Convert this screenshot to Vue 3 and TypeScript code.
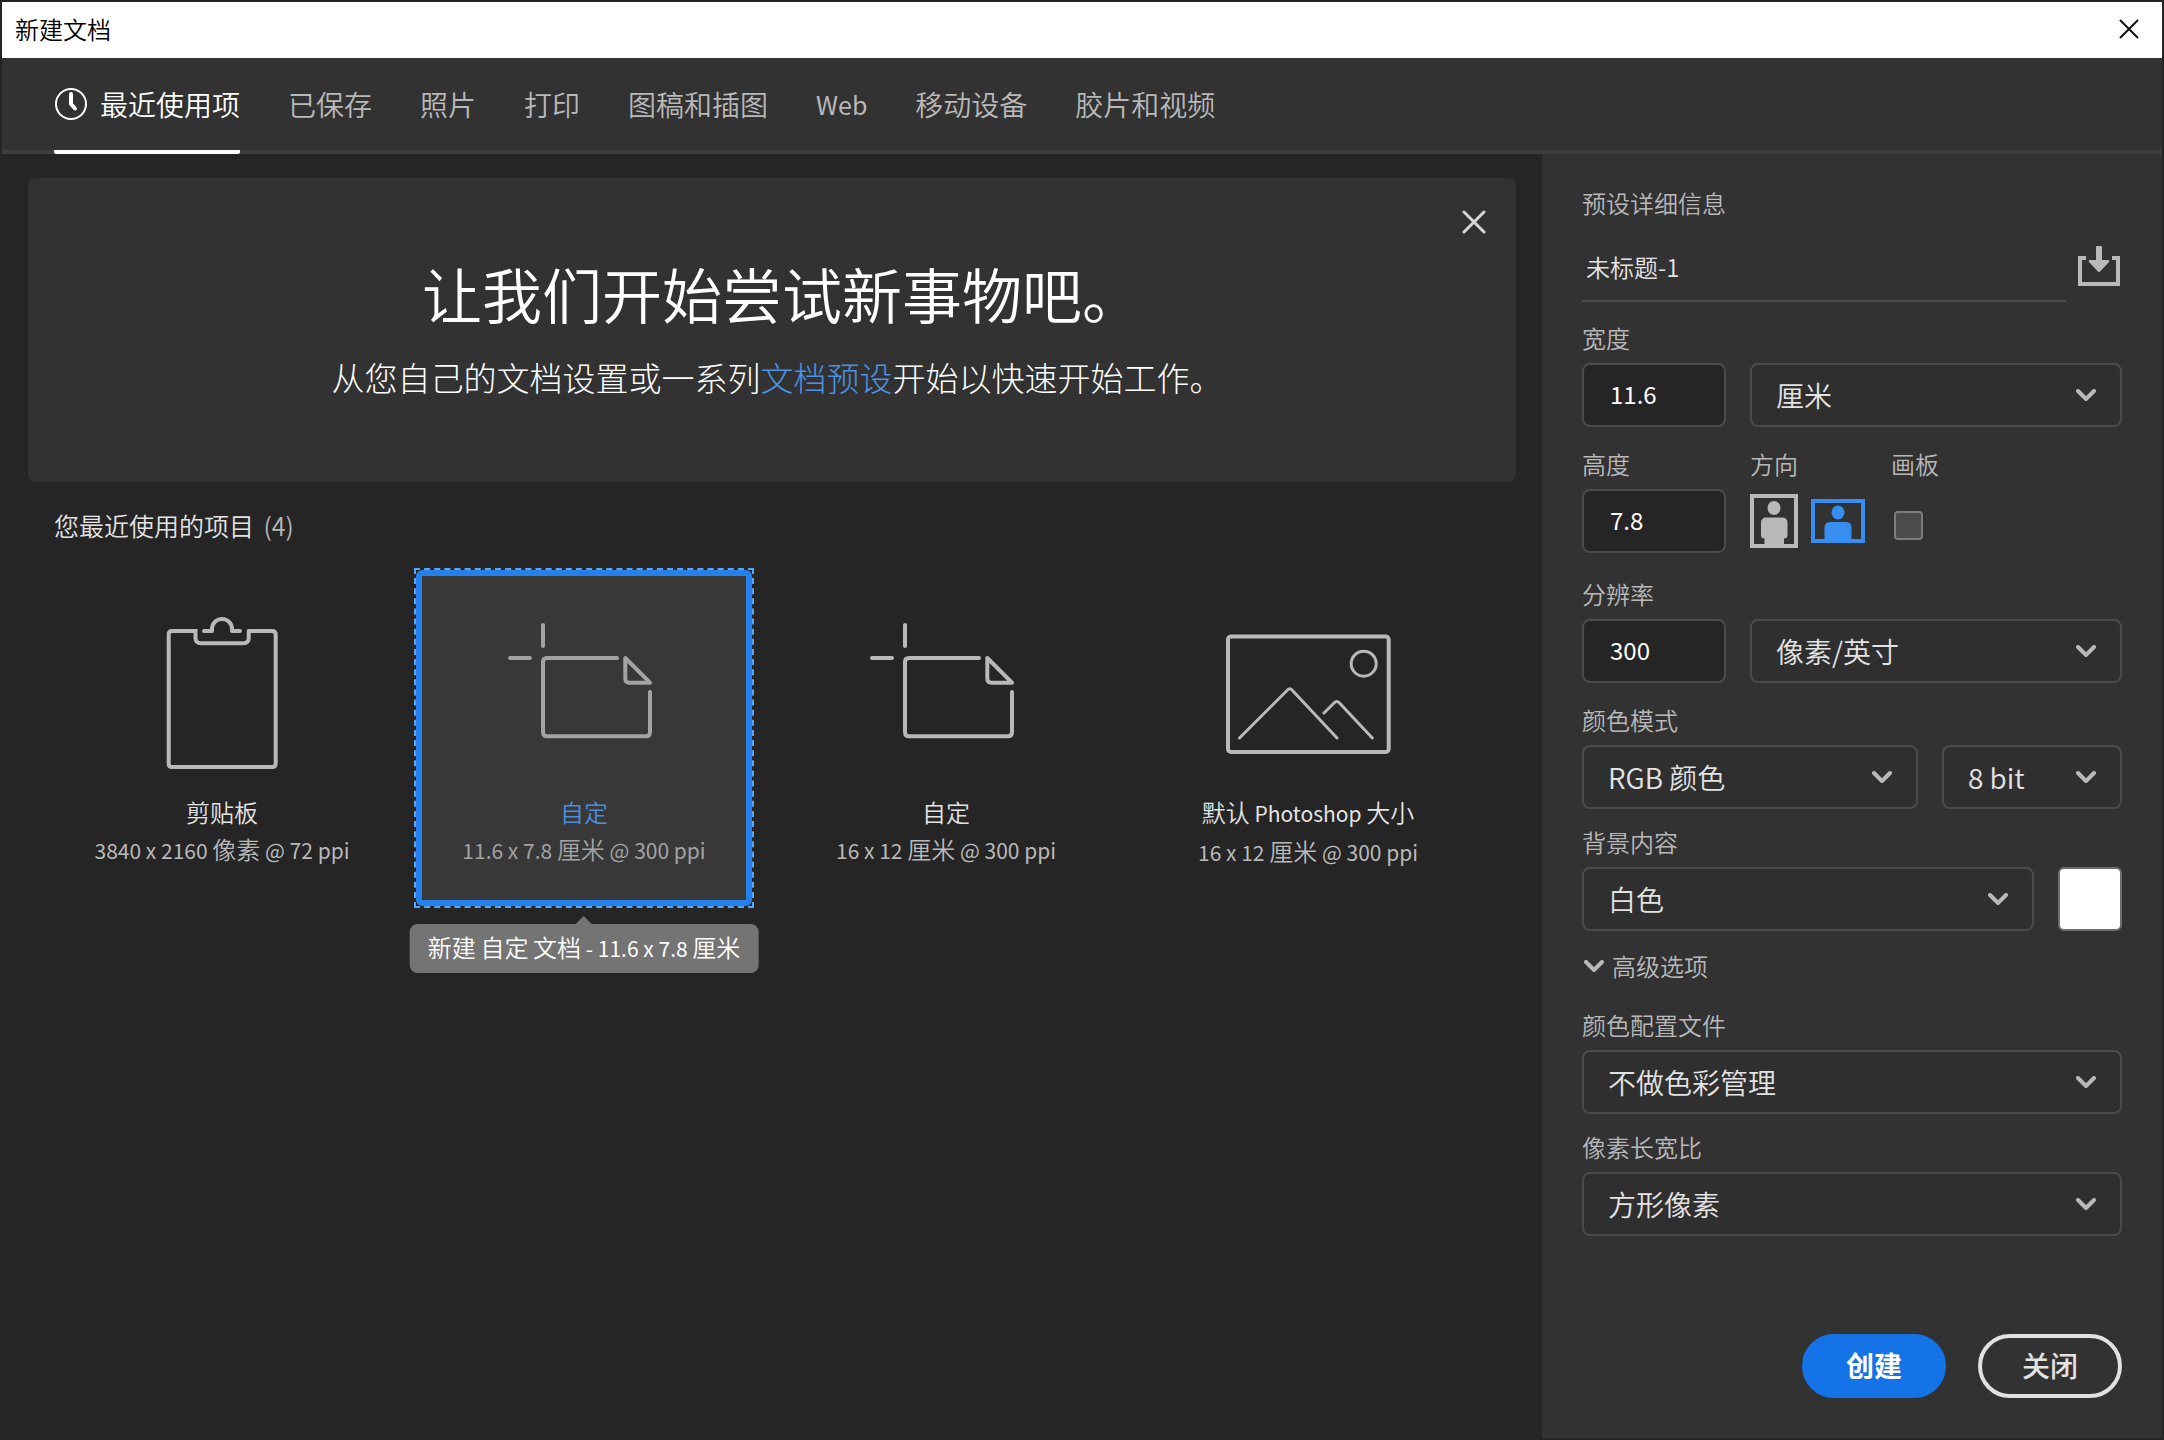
<script setup lang="ts">
import { ref } from 'vue'

interface Preset {
  id: string
  icon: 'clipboard' | 'custom' | 'picture'
  name: string
  size: string
  tip?: string
}

interface Run {
  text: string
  latin: boolean
}

// Splits mixed text so that Latin runs can be set one step smaller than the Chinese.
function runs(text: string): Run[] {
  const parts = text.match(/[\u4e00-\u9fff]+|[^\u4e00-\u9fff]+/g) ?? []
  return parts.map((part) => ({ text: part, latin: !/[\u4e00-\u9fff]/.test(part) }))
}

const tabs = ['最近使用项', '已保存', '照片', '打印', '图稿和插图', 'Web', '移动设备', '胶片和视频']
const activeTab = ref('最近使用项')

const presets: Preset[] = [
  { id: 'clip', icon: 'clipboard', name: '剪贴板', size: '3840 x 2160 像素 @ 72 ppi' },
  { id: 'custom-a', icon: 'custom', name: '自定', size: '11.6 x 7.8 厘米 @ 300 ppi', tip: '新建 自定 文档 - 11.6 x 7.8 厘米' },
  { id: 'custom-b', icon: 'custom', name: '自定', size: '16 x 12 厘米 @ 300 ppi' },
  { id: 'default', icon: 'picture', name: '默认 Photoshop 大小', size: '16 x 12 厘米 @ 300 ppi' },
]
const selected = ref('custom-a')

const docName = ref('未标题-1')
const docWidth = ref('11.6')
const docHeight = ref('7.8')
const resolution = ref('300')
const orientation = ref<'portrait' | 'landscape'>('landscape')
const artboard = ref(false)
const bannerOpen = ref(true)
</script>

<template>
  <div class="window">
    <header class="titlebar">
      <span>新建文档</span>
      <button class="plain" type="button" aria-label="关闭窗口">
        <svg width="20" height="20" viewBox="0 0 20 20"><path d="M1 1 L19 19 M19 1 L1 19" stroke="#111" stroke-width="2" /></svg>
      </button>
    </header>

    <nav class="tabs">
      <button
        v-for="(tab, i) in tabs"
        :key="tab"
        type="button"
        class="tab"
        :class="{ active: tab === activeTab }"
        @click="activeTab = tab"
      >
        <svg v-if="i === 0" width="34" height="34" viewBox="0 0 34 34" fill="none" stroke="currentColor">
          <circle cx="17" cy="17" r="15" stroke-width="2" />
          <path d="M17 7 V17 L21 21.500" stroke-width="4" stroke-linecap="round" stroke-linejoin="round" />
        </svg>
        <span v-for="run in runs(tab)" :key="run.text" :class="{ latin: run.latin }">{{ run.text }}</span>
      </button>
    </nav>

    <div class="body">
      <main class="content">
        <section v-if="bannerOpen" class="banner">
          <button class="plain banner-close" type="button" aria-label="关闭横幅" @click="bannerOpen = false">
            <svg width="24" height="24" viewBox="0 0 24 24"><path d="M2 2 L22 22 M22 2 L2 22" stroke="#d6d6d6" stroke-width="3" stroke-linecap="round" /></svg>
          </button>
          <h1>让我们开始尝试新事物吧。</h1>
          <p>从您自己的文档设置或一系列<a href="#">文档预设</a>开始以快速开始工作。</p>
        </section>

        <h2 class="recent">您最近使用的项目 <span>(4)</span></h2>

        <div class="cards">
          <div v-for="p in presets" :key="p.id" class="cell" :class="{ focused: p.id === selected }">
            <button type="button" class="card" :class="{ selected: p.id === selected }" @click="selected = p.id">
              <svg class="art" width="200" height="160" viewBox="0 0 200 160" fill="none" stroke="currentColor" stroke-width="4" stroke-linecap="round" stroke-linejoin="round">
                <template v-if="p.icon === 'clipboard'">
                  <path stroke-linecap="butt" d="M73.500 21 H50 Q46.700 21 46.700 24.500 V153.500 Q46.700 157 50 157 H150 Q153.700 157 153.700 153.500 V24.500 Q153.700 21 150 21 H126.700 V28 Q126.700 33.300 121.500 33.300 H79 Q73.500 33.300 73.500 28 V19" />
                  <path d="M82 21 H90 V19 A10 10 0 0 1 110 19 V21 H118" />
                </template>
                <template v-else-if="p.icon === 'custom'">
                  <path d="M59 15 V36 M26 48 H46 M133 48 H63 Q59 48 59 52 V122 Q59 126.300 63 126.300 H162 Q166 126.300 166 122 V82" />
                  <path d="M141.300 48 V68.500 Q141.300 72.700 145.500 72.700 H166 Z" />
                </template>
                <template v-else>
                  <rect x="20" y="26.500" width="160.700" height="115.500" rx="3" />
                  <g stroke-width="3">
                    <circle cx="155.700" cy="53.700" r="12.500" />
                    <path d="M31.500 128 L79.500 80 Q81.700 77.500 84 80 L129 128 M116 103 L126 93 Q128.700 90 131.500 93 L164.300 128" />
                  </g>
                </template>
              </svg>
              <span class="name"><span v-for="run in runs(p.name)" :key="run.text" :class="{ latin: run.latin }">{{ run.text }}</span></span>
              <span class="size"><span v-for="run in runs(p.size)" :key="run.text" :class="{ latin: run.latin }">{{ run.text }}</span></span>
            </button>
            <div v-if="p.tip && p.id === selected" class="tip" role="tooltip"><span v-for="(run, n) in runs(p.tip)" :key="n" :class="{ latin: run.latin }">{{ run.text }}</span></div>
          </div>
        </div>
      </main>

      <aside class="details">
        <h3>预设详细信息</h3>

        <div class="name-row">
          <input v-model="docName" class="doc-name" type="text" aria-label="文档名称" />
          <button class="plain" type="button" aria-label="存储预设">
            <svg width="42" height="40" viewBox="0 0 42 40">
              <path d="M8 12 H2 V38 H40 V12 H34" fill="none" stroke="#b9b9b9" stroke-width="4" />
              <path d="M18 1 Q18 0 19 0 H23 Q24 0 24 1 V14 H30 Q32 14 31 16 L22 25.500 Q21 26.500 20 25.500 L11 16 Q10 14 12 14 H18 Z" fill="#b9b9b9" />
            </svg>
          </button>
        </div>

        <div class="row">
          <div class="field short">
            <label for="width">宽度</label>
            <input id="width" v-model="docWidth" class="box" type="text" />
          </div>
          <div class="field grow">
            <div class="select">
              <select aria-label="单位"><option>厘米</option></select>
              <svg class="chev" viewBox="0 0 20 13"><path d="M2 2 L10 10 L18 2" /></svg>
            </div>
          </div>
        </div>

        <div class="row gap-m">
          <div class="field short">
            <label for="height">高度</label>
            <input id="height" v-model="docHeight" class="box" type="text" />
          </div>
          <div class="field orient">
            <span class="label">方向</span>
            <div class="options">
              <button class="plain" :class="{ on: orientation === 'portrait' }" type="button" aria-label="纵向" @click="orientation = 'portrait'">
                <svg width="48" height="54" viewBox="0 0 48 54" fill="currentColor">
                  <rect x="2" y="2" width="44" height="50" fill="none" stroke="currentColor" stroke-width="4" />
                  <ellipse cx="24" cy="14" rx="6.500" ry="7" />
                  <path d="M11 29 Q11 23.500 16.500 23.500 H32 Q37.500 23.500 37.500 29 V41 Q37.500 44.500 34 44.500 V52 H14.500 V44.500 Q11 44.500 11 41 Z" />
                </svg>
              </button>
              <button class="plain" :class="{ on: orientation === 'landscape' }" type="button" aria-label="横向" @click="orientation = 'landscape'">
                <svg width="54" height="44" viewBox="0 0 54 44" fill="currentColor">
                  <rect x="2" y="2" width="50" height="40" fill="none" stroke="currentColor" stroke-width="4" />
                  <ellipse cx="27" cy="13.500" rx="6.500" ry="7" />
                  <path d="M13.500 29 Q13.500 23 19 23 H35 Q40.500 23 40.500 29 V42 H13.500 Z" />
                </svg>
              </button>
            </div>
          </div>
          <div class="field">
            <label for="artboard">画板</label>
            <div class="options check"><input id="artboard" v-model="artboard" type="checkbox" /></div>
          </div>
        </div>

        <div class="row gap-l">
          <div class="field short">
            <label for="res">分辨率</label>
            <input id="res" v-model="resolution" class="box" type="text" />
          </div>
          <div class="field grow">
            <div class="select">
              <select aria-label="分辨率单位"><option>像素/英寸</option></select>
              <svg class="chev" viewBox="0 0 20 13"><path d="M2 2 L10 10 L18 2" /></svg>
            </div>
          </div>
        </div>

        <div class="row gap-m">
          <div class="field grow">
            <label for="mode">颜色模式</label>
            <div class="select">
              <select id="mode"><option>RGB 颜色</option></select>
              <svg class="chev" viewBox="0 0 20 13"><path d="M2 2 L10 10 L18 2" /></svg>
            </div>
          </div>
          <div class="field depth">
            <div class="select">
              <select aria-label="位深度"><option>8 bit</option></select>
              <svg class="chev" viewBox="0 0 20 13"><path d="M2 2 L10 10 L18 2" /></svg>
            </div>
          </div>
        </div>

        <div class="row gap-s">
          <div class="field grow">
            <label for="bg">背景内容</label>
            <div class="select">
              <select id="bg"><option>白色</option></select>
              <svg class="chev" viewBox="0 0 20 13"><path d="M2 2 L10 10 L18 2" /></svg>
            </div>
          </div>
          <button class="swatch" type="button" aria-label="背景颜色"></button>
        </div>

        <button class="plain advanced" type="button">
          <svg class="mark" viewBox="0 0 20 13"><path d="M2 2 L10 10 L18 2" /></svg>
          <span>高级选项</span>
        </button>

        <div class="field gap-l">
          <label for="profile">颜色配置文件</label>
          <div class="select">
            <select id="profile"><option>不做色彩管理</option></select>
            <svg class="chev" viewBox="0 0 20 13"><path d="M2 2 L10 10 L18 2" /></svg>
          </div>
        </div>

        <div class="field gap-s">
          <label for="aspect">像素长宽比</label>
          <div class="select">
            <select id="aspect"><option>方形像素</option></select>
            <svg class="chev" viewBox="0 0 20 13"><path d="M2 2 L10 10 L18 2" /></svg>
          </div>
        </div>

        <footer class="actions">
          <button type="button" class="pill primary">创建</button>
          <button type="button" class="pill">关闭</button>
        </footer>
      </aside>
    </div>
  </div>
</template>

<style>
body {
  background: #252525;
}
</style>

<style scoped>
* {
  box-sizing: border-box;
}
.window {
  min-height: 100vh;
  display: flex;
  flex-direction: column;
  border: 2px solid #252525;
  background: #252525;
  color: #e3e3e3;
  font-family: 'Noto Sans CJK SC', sans-serif;
  font-size: 24px;
  font-weight: 350;
  line-height: 36px;
}
button,
input,
select {
  font: inherit;
  color: inherit;
  margin: 0;
}
svg {
  display: block;
}
.plain {
  padding: 0;
  border: 0;
  background: none;
}
.latin {
  font-size: 21px;
  font-weight: 400;
  white-space: pre;
}
.titlebar {
  display: flex;
  justify-content: space-between;
  align-items: center;
  height: 56px;
  padding: 0 23px 2px 13px;
  background: #fff;
  color: #000;
}
.tabs {
  display: flex;
  gap: 48px;
  height: 96px;
  padding: 0 52px;
  background: #323232;
  border-bottom: 4px solid #3e3e3e;
  font-size: 28px;
}
.tab {
  display: flex;
  align-items: center;
  gap: 12px;
  margin-bottom: -4px;
  padding: 0;
  border: 0;
  border-bottom: 4px solid transparent;
  background: none;
  color: #b9b9b9;
  white-space: nowrap;
}
.tab .latin {
  font-size: 25px;
}
.tab.active {
  color: #fff;
  border-bottom-color: #fff;
  border-radius: 2px;
}
.body {
  flex: 1;
  display: flex;
}
.content {
  flex: 1;
  min-width: 0;
  padding: 24px 26px;
}
.banner {
  position: relative;
  height: 304px;
  padding-top: 71px;
  border-radius: 8px;
  background: #323232;
  color: #fff;
  text-align: center;
}
.banner h1 {
  margin: 0;
  padding-left: 20px;
  font-size: 60px;
  line-height: 88px;
  font-weight: 350;
}
.banner p {
  margin: 16px 0 0;
  padding-left: 10px;
  font-size: 33px;
  line-height: 48px;
  font-weight: 300;
}
.banner a {
  color: #4b93e6;
  text-decoration: none;
}
.banner-close {
  position: absolute;
  top: 32px;
  right: 30px;
}
.recent {
  margin: 25px 0 27px 26px;
  font-size: 25px;
  font-weight: 350;
  line-height: 36px;
}
.recent span {
  margin-left: 4px;
  color: #b9b9b9;
}
.cards {
  display: grid;
  grid-template-columns: repeat(auto-fill, 336px);
  gap: 26px;
  padding-left: 26px;
}
.cell {
  position: relative;
}
.focused {
  outline: 2px dashed #5aa5ef;
}
.card {
  display: flex;
  flex-direction: column;
  align-items: center;
  width: 100%;
  height: 336px;
  padding: 34px 0 0;
  border: 6px solid transparent;
  border-radius: 6px;
  background: none;
  white-space: nowrap;
}
.card.selected {
  border-color: #2680eb;
  background: #383838;
}
.art {
  color: #b9b9b9;
  margin-bottom: 23px;
}
.name,
.size {
  line-height: 37px;
}
.size {
  color: #b9b9b9;
}
.selected .art,
.selected .size {
  color: #a3a3a3;
}
.selected .name {
  color: #4b8fdf;
}
.tip {
  position: absolute;
  top: 354px;
  left: 50%;
  transform: translateX(-50%);
  padding: 5px 18px 7px;
  border-radius: 8px;
  background: #747474;
  color: #fff;
  white-space: nowrap;
}
.tip::before {
  content: '';
  position: absolute;
  bottom: 100%;
  left: 50%;
  margin-left: -8px;
  border: 8px solid transparent;
  border-top: 0;
  border-bottom-color: #747474;
}
.details {
  flex: 0 0 620px;
  display: flex;
  flex-direction: column;
  padding: 31px 40px 40px;
  background: #323232;
}
.details h3 {
  margin: 0;
  font-size: 24px;
  line-height: 36px;
  font-weight: 350;
  color: #b9b9b9;
}
.name-row {
  display: flex;
  align-items: center;
  justify-content: space-between;
  margin: 13px 0 18px;
  padding-right: 2px;
}
.doc-name {
  width: 484px;
  height: 68px;
  padding: 0 4px 2px;
  border: 0;
  border-bottom: 2px solid #4b4b4b;
  background: none;
  outline: 0;
}
.name-row button {
  margin-top: -4px;
}
.row {
  display: flex;
  align-items: flex-end;
  gap: 24px;
}
.gap-s {
  margin-top: 15px;
}
.gap-m {
  margin-top: 19px;
}
.gap-l {
  margin-top: 23px;
}
.field {
  display: flex;
  flex-direction: column;
}
.short {
  width: 144px;
}
.grow {
  flex: 1;
}
.depth {
  width: 180px;
}
.orient {
  width: 117px;
}
label,
.label {
  margin-bottom: 7px;
  color: #b9b9b9;
}
.box {
  width: 100%;
  height: 64px;
  padding: 0 26px 4px;
  border: 2px solid #4b4b4b;
  border-radius: 8px;
  background: #252525;
  color: #fff;
  font-weight: 400;
}
.select {
  position: relative;
}
select {
  display: block;
  width: 100%;
  height: 64px;
  padding: 0 24px;
  border: 2px solid #4b4b4b;
  border-radius: 8px;
  background: #2f2f2f;
  appearance: none;
  font-size: 28px;
}
.chev,
.mark {
  width: 20px;
  height: 13px;
  fill: none;
  stroke: #b9b9b9;
  stroke-width: 4;
  stroke-linecap: round;
  stroke-linejoin: round;
}
.chev {
  position: absolute;
  right: 26px;
  top: 26px;
  pointer-events: none;
}
.options {
  display: flex;
  align-items: center;
  gap: 13px;
  height: 64px;
  color: #b9b9b9;
}
.options .on {
  color: #378ef0;
}
.check {
  padding: 8px 0 0 3px;
}
.check input {
  appearance: none;
  width: 29px;
  height: 29px;
  border: 2px solid #7d7d7d;
  border-radius: 4px;
  background: #4b4b4b;
}
.swatch {
  width: 64px;
  height: 64px;
  padding: 0;
  border: 2px solid #6e6e6e;
  border-radius: 6px;
  background: #fff;
}
.advanced {
  display: flex;
  align-items: center;
  gap: 8px;
  margin-top: 17px;
  padding-left: 2px;
  color: #b9b9b9;
}
.actions {
  display: flex;
  justify-content: flex-end;
  gap: 32px;
  margin-top: auto;
  padding-top: 40px;
}
.pill {
  width: 144px;
  height: 64px;
  padding: 0 0 2px;
  border: 4px solid #e1e1e1;
  border-radius: 32px;
  background: none;
  font-size: 28px;
  font-weight: 500;
}
.pill.primary {
  border-color: #1473e6;
  background: #1473e6;
  color: #fff;
  font-weight: 700;
}
</style>
